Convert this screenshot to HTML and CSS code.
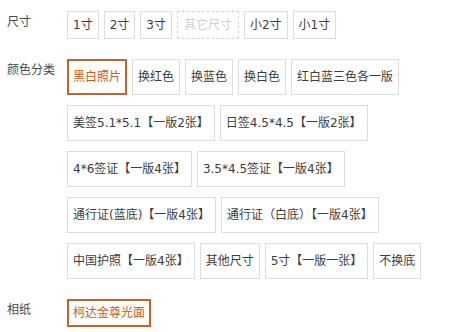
FILE: index.html
```
<!DOCTYPE html>
<html lang="zh-CN">
<head>
    <meta charset="UTF-8">
    <meta name="viewport" content="width=device-width, initial-scale=1.0">
    <title>商品属性</title>
    <link rel="stylesheet" href="styles.css">
</head>
<body>
    <div class="sku-panel">
        <!-- 尺寸 -->
        <div class="prop">
            <div class="prop-label">尺寸</div>
            <ul class="prop-values small">
                <li class="value">1寸</li>
                <li class="value">2寸</li>
                <li class="value">3寸</li>
                <li class="value disabled">其它尺寸</li>
                <li class="value">小2寸</li>
                <li class="value">小1寸</li>
            </ul>
        </div>

        <!-- 颜色分类 -->
        <div class="prop">
            <div class="prop-label">颜色分类</div>
            <ul class="prop-values">
                <li class="value selected">黑白照片</li>
                <li class="value">换红色</li>
                <li class="value">换蓝色</li>
                <li class="value">换白色</li>
                <li class="value">红白蓝三色各一版</li>
                <li class="value">美签5.1*5.1【一版2张】</li>
                <li class="value">日签4.5*4.5【一版2张】</li>
                <li class="value">4*6签证【一版4张】</li>
                <li class="value">3.5*4.5签证【一版4张】</li>
                <li class="value">通行证(蓝底)【一版4张】</li>
                <li class="value">通行证（白底）【一版4张】</li>
                <li class="value">中国护照【一版4张】</li>
                <li class="value">其他尺寸</li>
                <li class="value">5寸【一版一张】</li>
                <li class="value">不换底</li>
            </ul>
        </div>

        <!-- 相纸 -->
        <div class="prop">
            <div class="prop-label">相纸</div>
            <ul class="prop-values small">
                <li class="value selected">柯达金尊光面</li>
            </ul>
        </div>
    </div>
</body>
</html>
```

FILE: styles.css
```
/* Page */
body {
    margin: 0;
    background: #fff;
    color: #3c3c3c;
    font-family: "DejaVu Sans", "Noto Sans CJK SC", sans-serif;
    font-size: 12px;
}

.sku-panel {
    padding: 11px 0 0 7px;
}

/* One property row: label + values */
.prop {
    display: flex;
    margin-bottom: 20px;
}

.prop-label {
    width: 60px;
    flex-shrink: 0;
    padding-top: 2px;
    line-height: 18px;
    color: #4a4a4a;
}

.prop-values {
    display: flex;
    flex-wrap: wrap;
    gap: 10px 5px;
    margin: 0;
    padding: 0;
    list-style: none;
    width: 385px;
}

/* Value boxes */
.value {
    padding: 5px;
    line-height: 24px;
    border: 1px solid #dcdcdc;
    white-space: nowrap;
    cursor: pointer;
}

.small .value {
    line-height: 16px;
}

.value.selected {
    padding: 4px;
    border: 2px solid #c1652f;
    color: #cc5a1c;
}

.value.disabled {
    padding: 5px 6px;
    border: 1px dashed #d6d6d6;
    color: #cfcfcf;
    cursor: not-allowed;
}
```
